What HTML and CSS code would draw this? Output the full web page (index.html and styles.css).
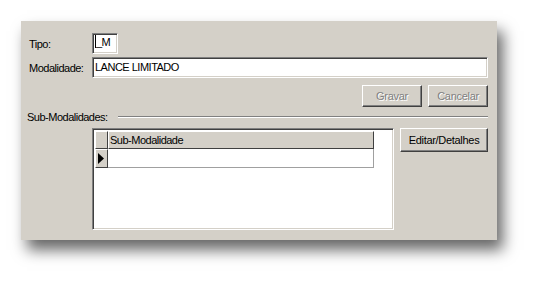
FILE: index.html
```html
<!DOCTYPE html>
<html>
<head>
  <meta charset="utf-8">
  <title>Modalidade</title>
  <link rel="stylesheet" href="styles.css">
</head>
<body>
  <div class="panel">
    <div class="row">
      <label class="lbl">Tipo:</label>
      <div class="field tipo"><span class="caret"></span>_M</div>
    </div>
    <div class="row row2">
      <label class="lbl">Modalidade:</label>
      <div class="field modal">LANCE LIMITADO</div>
    </div>
    <div class="actions">
      <button class="btn disabled">Gravar</button>
      <button class="btn disabled">Cancelar</button>
    </div>
    <div class="group">
      <span>Sub-Modalidades:</span>
      <div class="rule"></div>
    </div>
    <div class="gridrow">
      <div class="grid">
        <div class="ghead">
          <div class="gind"></div>
          <div class="gcol">Sub-Modalidade</div>
        </div>
        <div class="grow">
          <div class="gind cur"><svg width="6" height="11" viewBox="0 0 6 11"><path d="M0 0 L6 5.5 L0 11 Z" fill="#000"/></svg></div>
          <div class="gcell"></div>
        </div>
      </div>
      <button class="btn edit">Editar/Detalhes</button>
    </div>
  </div>
</body>
</html>
```

FILE: styles.css
```css
*{
    box-sizing: border-box;
}
body{
    margin: 0;
    min-height: 283px;
    background: #fff;
    font-family: "Liberation Sans", Arial, sans-serif;
    font-size: 11px;
    letter-spacing: -0.5px;
    color: #000;
}
.panel{
    margin: 21px 0 0 21px;
    width: 476px;
    height: 219px;
    background: #d4d0c8;
    padding: 12px 9px 0 7px;
    box-shadow: 6px 10px 14px rgba(0,0,0,0.6);
}
.row{
    display: flex;
    align-items: center;
    height: 21px;
}
.row2{
    margin-top: 3px;
}
.lbl{
    width: 64px;
    padding-left: 1px;
}
.field{
    height: 21px;
    background: #fff;
    border-top: 1px solid #808080;
    border-left: 1px solid #808080;
    border-right: 1px solid #fff;
    border-bottom: 1px solid #fff;
    box-shadow: inset 1px 1px #404040, inset -1px -1px #d4d0c8;
    padding: 3px 2px 0;
    white-space: nowrap;
}
.tipo{
    width: 26px;
    display: flex;
    align-items: flex-end;
    padding-bottom: 5px;
    line-height: 11px;
}
.caret{
    width: 1px;
    height: 13px;
    background: #000;
}
.modal{
    flex: 1;
}
.actions{
    display: flex;
    justify-content: flex-end;
    gap: 6px;
    margin-top: 7px;
}
.btn{
    font-family: "Liberation Sans", Arial, sans-serif;
    font-size: 11px;
    letter-spacing: -0.3px;
    background: #d4d0c8;
    border-top: 1px solid #fff;
    border-left: 1px solid #fff;
    border-right: 1px solid #404040;
    border-bottom: 1px solid #404040;
    box-shadow: inset -1px -1px #808080;
    padding: 0;
    width: 60px;
    height: 22px;
    color: #000;
}
.disabled{
    color: #808080;
    text-shadow: 1px 1px #fff;
}
.group{
    display: flex;
    align-items: center;
    margin-top: 3px;
    height: 14px;
}
.group span{
    margin-left: -1px;
}
.rule{
    flex: 1;
    margin-left: 10px;
    border-top: 1px solid #808080;
    border-bottom: 1px solid #fff;
}
.gridrow{
    display: flex;
    margin-top: 4px;
    padding-left: 64px;
    gap: 6px;
}
.grid{
    width: 302px;
    height: 102px;
    background: #fff;
    border-top: 1px solid #808080;
    border-left: 1px solid #808080;
    border-right: 1px solid #fff;
    border-bottom: 1px solid #fff;
    box-shadow: inset 1px 1px #404040, inset -1px -1px #d4d0c8;
    padding: 2px 0 0 2px;
}
.ghead{
    display: flex;
    height: 18px;
}
.gind{
    width: 13px;
    background: #d4d0c8;
    border-top: 1px solid #fff;
    border-left: 1px solid #fff;
    border-right: 1px solid #404040;
    border-bottom: 1px solid #404040;
}
.gcol{
    width: 266px;
    background: #d4d0c8;
    border-top: 1px solid #fff;
    border-left: 1px solid #fff;
    border-right: 1px solid #404040;
    border-bottom: 1px solid #404040;
    padding: 2px 0 0 1px;
}
.grow{
    display: flex;
    height: 19px;
}
.cur{
    display: flex;
    align-items: center;
    padding-left: 2px;
}
.gcell{
    width: 266px;
    border-bottom: 1px solid #a0a0a0;
    border-right: 1px solid #a0a0a0;
}
.edit{
    width: 88px;
    height: 24px;
}
```
